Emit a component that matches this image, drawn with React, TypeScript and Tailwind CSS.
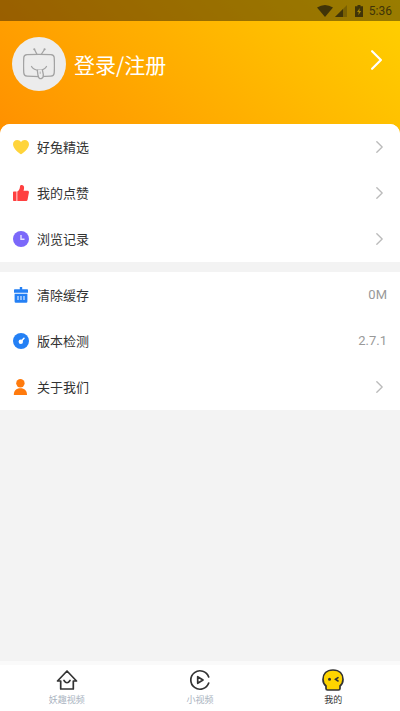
import { useState } from 'react';
import type { ReactNode } from 'react';

interface MenuItem {
  label: string;
  icon: ReactNode;
  value?: string;
}

function HeartIcon() {
  return (
    <svg className="w-4 h-4" viewBox="0 0 16 16" fill="#ffd43b" aria-hidden="true">
      <path d="M8 15.2C7.2 15.2 0 9.9 0 5.3 0 2.8 1.9 1 4.2 1 5.9 1 7.2 1.9 8 3.1 8.8 1.9 10.1 1 11.8 1 14.1 1 16 2.8 16 5.3 16 9.9 8.8 15.2 8 15.2z" />
    </svg>
  );
}

function ThumbIcon() {
  return (
    <svg className="w-4 h-4" viewBox="0 0 16 16" fill="#ff4040" aria-hidden="true">
      <path d="M.8 6.5H3.5V16H.8A.8.8 0 0 1 0 15.2V7.3A.8.8 0 0 1 .8 6.5z" />
      <path d="M4.3 6.6C6 5.6 6.8 4 7 1.5 7.1.4 7.8 0 8.7 0 10.2 0 11.1 1.1 11.1 2.7 11.1 3.9 10.8 5 10.5 5.7H14.5C15.6 5.7 16.1 6.5 15.9 7.5L14.6 14.5C14.4 15.5 13.8 16 12.9 16H4.3z" />
    </svg>
  );
}

function ClockIcon() {
  return (
    <svg className="w-4 h-4" viewBox="0 0 16 16" aria-hidden="true">
      <circle cx="8" cy="8" r="8" fill="#7b68fa" />
      <path d="M8 4V8.3H11.5" fill="none" stroke="#e4e0ff" strokeWidth="1.4" />
    </svg>
  );
}

function CleanIcon() {
  return (
    <svg className="w-4 h-4" viewBox="0 0 16 16" fill="#2480f5" aria-hidden="true">
      <path d="M6.8 0H9.2V2.2H14.3A.7.7 0 0 1 15 2.9V5.8H1V2.9A.7.7 0 0 1 1.7 2.2H6.8z" />
      <path d="M1.6 6.8H14.4V14.5A1.2 1.2 0 0 1 13.2 15.7H2.8A1.2 1.2 0 0 1 1.6 14.5z" />
      <path d="M5 9V13M8 9V13M11 9V13" stroke="#d8e8ff" strokeWidth="1.2" />
    </svg>
  );
}

function VersionIcon() {
  return (
    <svg className="w-4 h-4" viewBox="0 0 16 16" aria-hidden="true">
      <circle cx="8" cy="8" r="8" fill="#2480f5" />
      <circle cx="7.8" cy="8.7" r="2.2" fill="#fff" />
      <path d="M8.2 8.3 11 5.2" stroke="#fff" strokeWidth="1.5" strokeLinecap="round" />
    </svg>
  );
}

function PersonIcon() {
  return (
    <svg className="w-4 h-4" viewBox="0 0 16 16" fill="#ff7a0c" aria-hidden="true">
      <circle cx="7.4" cy="4.3" r="4.2" />
      <path d="M.8 16C.8 11.7 3.2 9.3 7.4 9.3S14 11.7 14 16z" />
    </svg>
  );
}

function Chevron({ className }: { className: string }) {
  return (
    <svg className={className} viewBox="0 0 10 18" fill="none" stroke="currentColor" strokeLinecap="round" strokeLinejoin="round" aria-hidden="true">
      <path d="M1 1 9 9 1 17" />
    </svg>
  );
}

function TvFace() {
  return (
    <svg className="w-8 h-8" viewBox="0 0 32 32" fill="none" stroke="#a3a3a3" strokeWidth="1.3" strokeLinecap="round" aria-hidden="true">
      <path d="M11.5 1.5 13.8 6M21.5 1.5 18.5 6" />
      <circle cx="11.3" cy="1.3" r=".4" />
      <circle cx="21.6" cy="1.3" r=".4" />
      <path d="M4 6.7Q16 6 28 6.7 31 7 31.2 9.5 31.7 18 31.2 25 31 28 28 28.2 16 28.9 4 28.2 1 28 .8 25 .3 18 .8 9.500 1 7 4 6.7z" />
      <path d="M8.5 18.5C11.5 23.500 20.5 23.5 23.5 18.5" />
      <path d="M14.3 22.2 15 27.5Q15.900 31.3 18.3 30.6 20.7 29.6 20.3 26.5L19.4 21.8" fill="#ececec" />
      <path d="M17.2 24V25.5" strokeWidth=".8" />
    </svg>
  );
}

function HomeIcon() {
  return (
    <svg className="w-[22px] h-[22px]" viewBox="0 0 22 22" fill="none" stroke="#333" strokeWidth="1.7" strokeLinejoin="round" strokeLinecap="round" aria-hidden="true">
      <path d="M11 2 1.5 12H4.7V20H17.3V12H20.5z" />
      <path d="M8 11.5Q11 16 14 11.5" />
    </svg>
  );
}

function PlayIcon() {
  return (
    <svg className="w-[22px] h-[22px]" viewBox="0 0 22 22" fill="none" stroke="#333" strokeWidth="1.7" strokeLinejoin="round" strokeLinecap="round" aria-hidden="true">
      <path d="M19.7 8A9.2 9.2 0 1 0 19.7 14" />
      <path d="M8.7 7.7V14.3L14 11z" />
    </svg>
  );
}

function MineIcon() {
  return (
    <svg className="w-[22px] h-[22px]" viewBox="0 0 22 22" aria-hidden="true">
      <path d="M11 1C17.5 1 21 5 21 10.5 21 13.5 19.8 15.5 18 17V19.5Q18 21 16.5 21H5.5Q4 21 4 19.5V17C2.2 15.5 1 13.5 1 10.5 1 5 4.5 1 11 1z" fill="#ffd500" stroke="#333" strokeWidth="1.7" strokeLinejoin="round" />
      <circle cx="7.5" cy="10.3" r="1.5" fill="#333" />
      <path d="M16 8.6 13.5 10.3 16 12" fill="none" stroke="#333" strokeWidth="1.6" strokeLinecap="round" />
    </svg>
  );
}

const activity: MenuItem[] = [
  { label: '好兔精选', icon: <HeartIcon /> },
  { label: '我的点赞', icon: <ThumbIcon /> },
  { label: '浏览记录', icon: <ClockIcon /> },
];

const settings: MenuItem[] = [
  { label: '清除缓存', icon: <CleanIcon />, value: '0M' },
  { label: '版本检测', icon: <VersionIcon />, value: '2.7.1' },
  { label: '关于我们', icon: <PersonIcon /> },
];

const tabs = [
  { label: '妖趣视频', icon: <HomeIcon /> },
  { label: '小视频', icon: <PlayIcon /> },
  { label: '我的', icon: <MineIcon /> },
];

function MenuList({ items }: { items: MenuItem[] }) {
  return (
    <ul>
      {items.map((item) => (
        <li key={item.label}>
          <button type="button" className="flex w-full h-[46px] items-center gap-2 px-[13px] text-left">
            {item.icon}
            <span className="flex-1 text-[13px] leading-5 text-[#333]">{item.label}</span>
            {item.value ? (
              <span className="font-[Roboto] text-[13px] text-[#999]">{item.value}</span>
            ) : (
              <Chevron className="w-[7px] h-3 mr-1 stroke-2 text-[#bbb]" />
            )}
          </button>
        </li>
      ))}
    </ul>
  );
}

function StatusBar() {
  return (
    <div className="flex h-[21px] items-center justify-end bg-black/40 pr-2 text-[#403408]">
      <svg className="w-4 h-3" viewBox="0 0 16 12" fill="currentColor" aria-hidden="true">
        <path d="M0 2.5Q8-2.5 16 2.5L8 12z" />
      </svg>
      <svg className="ml-[2px] w-3 h-3" viewBox="0 0 12 12" fill="currentColor" aria-hidden="true">
        <path d="M12 0V12H0z" opacity=".35" />
        <path d="M8 4V12H0z" />
      </svg>
      <svg className="ml-2 w-2 h-3" viewBox="0 0 8 12" aria-hidden="true">
        <path d="M2.5 0H5.5V1.3H8V12H0V1.3H2.5z" fill="currentColor" />
        <path d="M4.8 3 2 7H3.8L3.3 10.3 6.2 6H4.3z" fill="#a38500" />
      </svg>
      <span className="ml-[6px] font-[Roboto] text-xs">5:36</span>
    </div>
  );
}

export default function App() {
  const [active, setActive] = useState('我的');

  return (
    <div className="flex min-h-screen flex-col bg-[#f3f3f3] font-['Noto_Sans_CJK_SC',sans-serif]">
      <header className="bg-linear-45 from-[#ff9000] to-[#ffd000]">
        <StatusBar />
        <button type="button" className="flex w-full items-center gap-2 pt-4 pb-[33px] pl-3 pr-[18px] text-left text-white">
          <span className="flex w-[54px] h-[54px] items-center justify-center rounded-full bg-[#ececec]">
            <TvFace />
          </span>
          <span className="flex-1 text-[21px] leading-8">登录/注册</span>
          <Chevron className="w-[11px] h-5 mb-2 stroke-2" />
        </button>
        <div className="h-[10px] rounded-t-[10px] bg-white" />
      </header>

      <main className="flex flex-1 flex-col gap-[10px]">
        <section className="-mt-[10px] rounded-t-[10px] bg-white">
          <MenuList items={activity} />
        </section>
        <section className="bg-white">
          <MenuList items={settings} />
        </section>
      </main>

      <nav className="flex border-t-4 border-[#fafafa] bg-white py-1">
        {tabs.map((tab) => (
          <button
            key={tab.label}
            type="button"
            onClick={() => setActive(tab.label)}
            className={[
              'flex flex-1 flex-col items-center gap-[2px] text-[9px] leading-[14px]',
              active === tab.label ? 'text-[#333]' : 'text-[#a9b3c0]',
            ].join(' ')}
          >
            {tab.icon}
            <span>{tab.label}</span>
          </button>
        ))}
      </nav>
    </div>
  );
}
